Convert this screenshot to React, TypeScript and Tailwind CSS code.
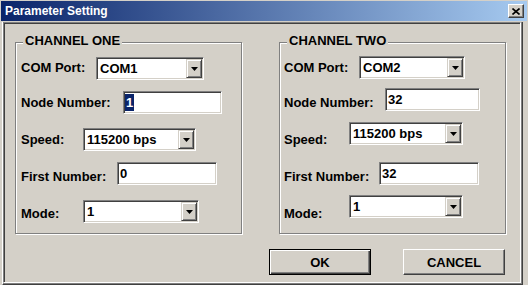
import React from "react";

const sunken =
  "border border-t-[#808080] border-l-[#808080] border-r-white border-b-white shadow-[inset_1px_1px_0_#404040,inset_-1px_-1px_0_#d4d0c8]";

function Arrow() {
  return (
    <svg width="7" height="4" viewBox="0 0 7 4" className="block">
      <polygon points="0,0 7,0 3.5,4" fill="#000" />
    </svg>
  );
}

function Select({ value, cls }: { value: string; cls: string }) {
  return (
    <div className={`flex items-stretch bg-white shrink-0 ${sunken} ${cls}`}>
      <span className="flex-1 pl-[3px] leading-[15px] self-center whitespace-nowrap">{value}</span>
      <div className="w-[16px] my-[1px] mr-[1px] bg-[#d4d0c8] border border-t-[#d4d0c8] border-l-[#d4d0c8] border-r-[#404040] border-b-[#404040] shadow-[inset_1px_1px_0_#fff,inset_-1px_-1px_0_#808080] flex items-center justify-center">
        <Arrow />
      </div>
    </div>
  );
}

function Input({ value, cls, selected }: { value: string; cls: string; selected?: boolean }) {
  return (
    <div className={`flex items-center bg-white shrink-0 ${sunken} ${cls}`}>
      {selected ? (
        <span className="ml-[1px] bg-[#0a246a] text-white leading-[17px] px-[1px]">{value}</span>
      ) : (
        <span className="pl-[2px] leading-[15px]">{value}</span>
      )}
    </div>
  );
}

function Group({ title, children }: { title: string; children: React.ReactNode }) {
  return (
    <div className="relative w-[227px] h-[192px] shrink-0 border border-[#808080] shadow-[1px_1px_0_#fff,inset_1px_1px_0_#fff] flex flex-col">
      <span className="absolute left-[7px] top-[-10px] px-[2px] bg-[#d4d0c8] leading-[15px] whitespace-nowrap">
        {title}
      </span>
      {children}
    </div>
  );
}

export default function App() {
  return (
    <div className="w-[528px] h-[285px] bg-[#d4d0c8] flex flex-col overflow-hidden font-['Liberation_Sans',Arial,sans-serif] font-bold text-[13px] text-black">
      {/* Title bar */}
      <div className="mx-[1px] mt-[1px] h-[20px] shrink-0 bg-[linear-gradient(to_right,#0a246a,#a6caf0)] flex items-center pl-[4px] pr-[3px]">
        <span className="text-white text-[12px] leading-[14px]">Parameter Setting</span>
        <div className="ml-auto w-[16px] h-[14px] bg-[#d4d0c8] border border-t-white border-l-white border-r-[#404040] border-b-[#404040] shadow-[inset_-1px_-1px_0_#808080] flex items-center justify-center">
          <svg width="8" height="7" viewBox="0 0 8 7" className="block">
            <path d="M0.5 0.5 L7.5 6.5 M7.5 0.5 L0.5 6.5" stroke="#000" strokeWidth="1.6" />
          </svg>
        </div>
      </div>

      {/* Client area */}
      <div className="mt-[1px] ml-[2px] mr-[5px] flex-1 border-l border-l-white border-r border-r-[#404040] border-b border-b-[#404040] shadow-[inset_-1px_-1px_0_#808080] flex flex-col">
        <div className="flex-1 mb-[1px] mr-[1px] flex flex-col border border-t-[#808080] border-l-[#808080] border-r-white border-b-white shadow-[inset_1px_1px_0_#404040]">
          <div className="flex pl-[11px] pt-[19px] gap-[37px]">
            <Group title="CHANNEL ONE">
              <div className="flex flex-col pl-[5px]">
                <div className="flex items-start mt-[14px] h-[23px]">
                  <span className="w-[75px] shrink-0 mt-[3px] leading-[15px]">COM Port:</span>
                  <Select value="COM1" cls="w-[108px] h-[23px]" />
                </div>
                <div className="flex items-start mt-[11px] h-[23px]">
                  <span className="w-[102px] shrink-0 mt-[4px] leading-[15px]">Node Number:</span>
                  <Input value="1" selected cls="w-[99px] h-[23px]" />
                </div>
                <div className="flex items-start mt-[14px] h-[23px]">
                  <span className="w-[62px] shrink-0 mt-[4px] leading-[15px]">Speed:</span>
                  <Select value="115200 bps" cls="w-[113px] h-[23px]" />
                </div>
                <div className="flex items-start mt-[11px] h-[23px]">
                  <span className="w-[96px] shrink-0 mt-[7px] leading-[15px]">First Number:</span>
                  <Input value="0" cls="w-[100px] h-[23px]" />
                </div>
                <div className="flex items-start mt-[15px] h-[23px]">
                  <span className="w-[62px] shrink-0 mt-[6px] leading-[15px]">Mode:</span>
                  <Select value="1" cls="w-[116px] h-[23px]" />
                </div>
              </div>
            </Group>
            <Group title="CHANNEL TWO">
              <div className="flex flex-col pl-[4px]">
                <div className="flex items-start mt-[13px] h-[23px]">
                  <span className="w-[75px] shrink-0 mt-[4px] leading-[15px]">COM Port:</span>
                  <Select value="COM2" cls="w-[106px] h-[23px]" />
                </div>
                <div className="flex items-start mt-[9px] h-[23px]">
                  <span className="w-[101px] shrink-0 mt-[7px] leading-[15px]">Node Number:</span>
                  <Input value="32" cls="w-[95px] h-[23px]" />
                </div>
                <div className="flex items-start mt-[11px] h-[23px]">
                  <span className="w-[65px] shrink-0 mt-[10px] leading-[15px]">Speed:</span>
                  <Select value="115200 bps" cls="w-[114px] h-[23px]" />
                </div>
                <div className="flex items-start mt-[17px] h-[23px]">
                  <span className="w-[95px] shrink-0 mt-[7px] leading-[15px]">First Number:</span>
                  <Input value="32" cls="w-[100px] h-[23px]" />
                </div>
                <div className="flex items-start mt-[10px] h-[23px]">
                  <span className="w-[65px] shrink-0 mt-[11px] leading-[15px]">Mode:</span>
                  <Select value="1" cls="w-[114px] h-[23px]" />
                </div>
              </div>
            </Group>
          </div>

          <div className="flex pl-[265px] mt-[15px] gap-[32px]">
            <button className="w-[102px] h-[26px] bg-[#d4d0c8] border border-black shadow-[inset_1px_1px_0_#fff,inset_-1px_-1px_0_#404040,inset_-2px_-2px_0_#808080] font-bold text-[13px] leading-[15px]">
              OK
            </button>
            <button className="w-[102px] h-[26px] bg-[#d4d0c8] border border-t-white border-l-white border-r-[#404040] border-b-[#404040] shadow-[inset_-1px_-1px_0_#808080] font-bold text-[13px] leading-[15px]">
              CANCEL
            </button>
          </div>
        </div>
      </div>
    </div>
  );
}
